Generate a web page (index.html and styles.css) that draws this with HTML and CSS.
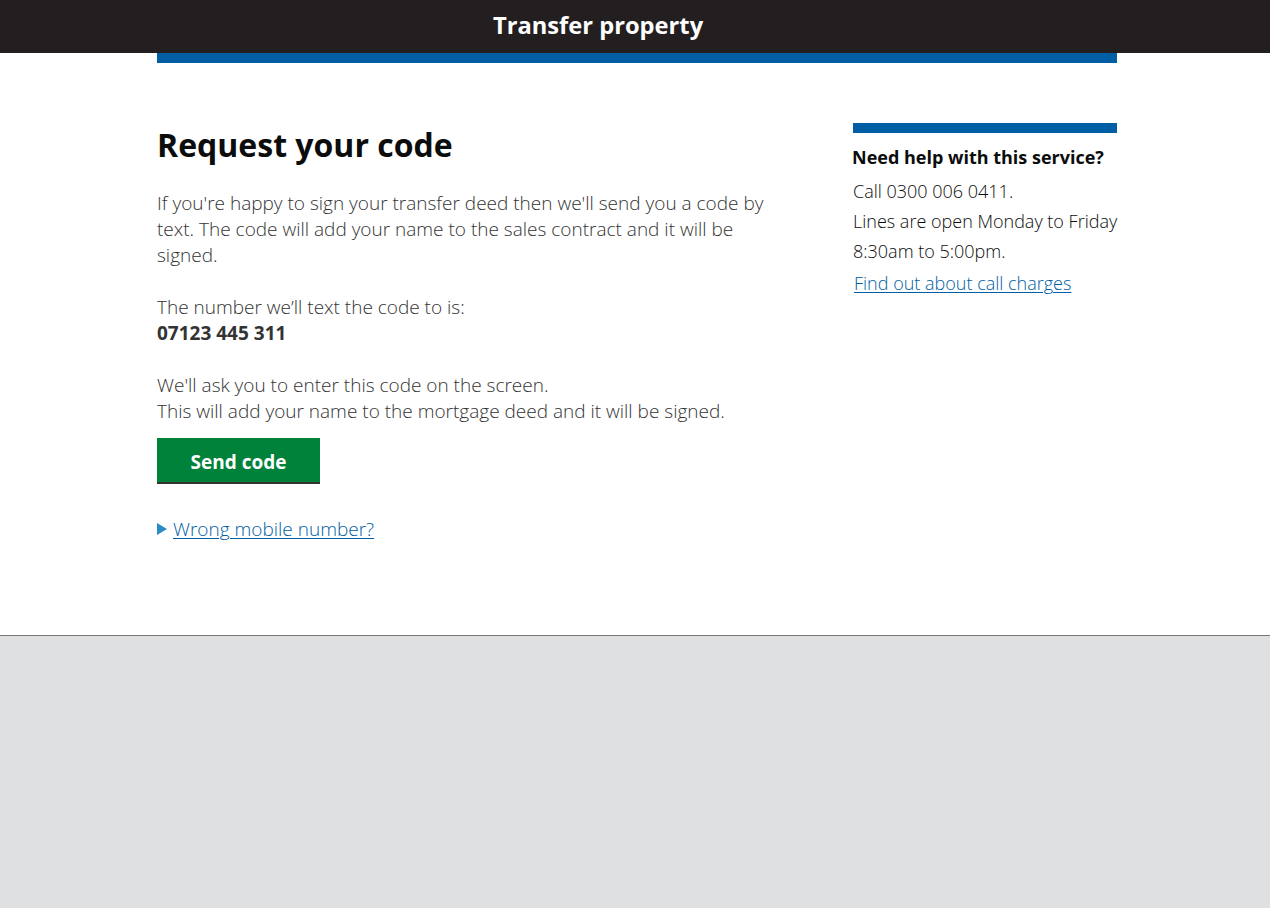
FILE: index.html
```html
<!DOCTYPE html>
<html lang="en">
<head>
<meta charset="utf-8">
<title>Transfer property</title>
<link rel="stylesheet" href="styles.css">
</head>
<body>
<header class="site-header">
  <div class="header-inner">
    <span class="service-name">Transfer property</span>
  </div>
</header>
<div class="container">
  <div class="phase-bar"></div>
  <main class="layout">
    <div class="main-col">
      <h1 class="heading">Request your code</h1>
      <p class="body-text">If you're happy to sign your transfer deed then we'll send you a code by text. The code will add your name to the sales contract and it will be signed.</p>
      <p class="body-text">The number we’ll text the code to is:<br><strong class="phone">07123 445 311</strong></p>
      <p class="body-text">We'll ask you to enter this code on the screen.<br>This will add your name to the mortgage deed and it will be signed.</p>
      <button class="button" type="button">Send code</button>
      <div class="details">
        <span class="arrow"></span><a href="#" class="link">Wrong mobile number?</a>
      </div>
    </div>
    <aside class="sidebar">
      <div class="sidebar-bar"></div>
      <h2 class="sidebar-title">Need help with this service?</h2>
      <p class="sidebar-text">Call 0300 006 0411.</p>
      <p class="sidebar-text">Lines are open Monday to Friday</p>
      <p class="sidebar-text">8:30am to 5:00pm.</p>
      <p class="sidebar-text sidebar-link"><a href="#" class="link">Find out about call charges</a></p>
    </aside>
  </main>
</div>
<footer class="site-footer"></footer>
</body>
</html>
```

FILE: styles.css
```css
html, body {
  margin: 0;
  padding: 0;
}
body {
  font-family: "Open Sans", "Liberation Sans", sans-serif;
  color: #333;
  background: #fff;
  min-height: 100vh;
  display: flex;
  flex-direction: column;
}
.site-header {
  background: #231f20;
  height: 53px;
}
.header-inner {
  width: 960px;
  margin: 0 auto;
  padding-left: 336px;
  box-sizing: border-box;
  height: 53px;
  display: flex;
  align-items: center;
}
.service-name {
  color: #fff;
  font-weight: 700;
  font-size: 23.7px;
  line-height: 1;
  position: relative;
  top: -1px;
  left: 2px;
}
.container {
  width: 960px;
  margin-left: calc(50% - 478px);
}
.phase-bar {
  height: 10px;
  background: #005ea5;
}
.layout {
  display: grid;
  grid-template-columns: 1fr 264px;
  column-gap: 40px;
  padding-top: 60px;
  padding-bottom: 93px;
}
.heading {
  margin: 2px 0 25px;
  font-size: 32px;
  line-height: 40px;
  font-weight: 700;
  color: #0b0c0c;
}
.body-text {
  margin: 0 0 26px;
  font-size: 19px;
  line-height: 26px;
  font-weight: 300;
  max-width: 620px;
}
.body-text:nth-of-type(3) {
  margin-bottom: 14px;
}
.phone {
  font-weight: 700;
}
.button {
  font-family: inherit;
  font-size: 19px;
  font-weight: 700;
  color: #fff;
  background: #00823b;
  border: 0;
  border-radius: 0;
  height: 44px;
  width: 163px;
  padding: 4px 0 0;
  box-shadow: 0 2px 0 #333;
  line-height: 40px;
  cursor: pointer;
  display: block;
}
.details {
  margin-top: 34px;
  font-size: 19px;
  line-height: 26px;
  font-weight: 300;
  display: flex;
  align-items: center;
}
.arrow {
  width: 0;
  height: 0;
  border-top: 6px solid transparent;
  border-bottom: 6px solid transparent;
  border-left: 10px solid #2b8cc4;
  margin-right: 6px;
}
.link {
  color: #005ea5;
  text-decoration: underline;
  text-decoration-thickness: 1px;
  text-underline-offset: 2px;
}
.sidebar-bar {
  height: 10px;
  background: #005ea5;
  margin-bottom: 12px;
}
.sidebar-title {
  margin: 0 0 7px -1px;
  font-size: 18px;
  line-height: 24px;
  font-weight: 700;
  color: #0b0c0c;
}
.sidebar-text {
  margin: 0;
  font-size: 18px;
  line-height: 30px;
  font-weight: 300;
  color: #0b0c0c;
  white-space: nowrap;
}
.sidebar-link {
  margin-top: 2px;
  padding-left: 1px;
}
.site-footer {
  flex: 1;
  background: #dee0e2;
  border-top: 1px solid #777;
}
```
